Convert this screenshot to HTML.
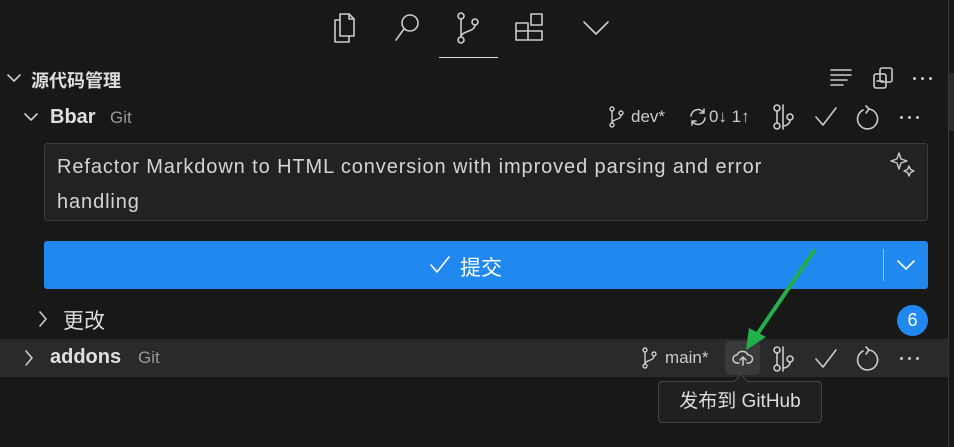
<!DOCTYPE html>
<html><head><meta charset="utf-8"><style>
*{margin:0;padding:0;box-sizing:border-box}
body{width:954px;height:447px;background:#181818;position:relative;overflow:hidden;font-family:"Segoe UI","Liberation Sans","Noto Sans CJK SC",sans-serif;color:#cccccc}
.a{position:absolute}
svg{position:absolute;overflow:visible}
.ic{fill:none;stroke:#cccccc;stroke-width:1.6;stroke-linecap:round;stroke-linejoin:round}
.dots{position:absolute;width:20px;height:4px}
.dots i{position:absolute;top:0;width:3px;height:3px;border-radius:50%;background:#ccc}
</style></head><body>
<!-- top tabs -->
<svg class="ic" style="left:332px;top:12px" width="28" height="32" viewBox="0 0 28 32"><path d="M8 2h9l5 5v17h-14z"/><path d="M17 2v5h5"/><path d="M8 8h-5v22h14v-6"/></svg>
<svg class="ic" style="left:392px;top:12px" width="30" height="30" viewBox="0 0 30 30"><circle cx="18" cy="11" r="8"/><path d="M12 17l-8 11"/></svg>
<svg class="ic" style="left:455px;top:12px" width="26" height="32" viewBox="0 0 26 32"><circle cx="6" cy="4" r="3"/><circle cx="6" cy="28" r="3"/><circle cx="20" cy="10" r="3"/><path d="M6 7v18M20 13c0 7-14 6-14 12"/></svg>
<svg class="ic" style="left:514px;top:12px" width="32" height="32" viewBox="0 0 32 32"><path d="M2 11h12v17h-12zM2 19h12M14 19h14v9h-14zM17 2h11v11h-11z"/></svg>
<svg class="ic" style="left:582px;top:20px" width="28" height="16" viewBox="0 0 28 16"><path d="M2 2l12 12l12-12"/></svg>
<div class="a" style="left:439px;top:57px;width:59px;height:1px;background:#e0e0e0"></div>
<!-- header -->
<svg class="ic" style="left:6px;top:73px" width="16" height="10" viewBox="0 0 16 10"><path d="M2 2l6 6l6-6"/></svg>
<div class="a" style="left:31px;top:67px;font-size:18px;font-weight:bold;color:#ddd">源代码管理</div>
<svg class="ic" style="left:830px;top:68px" width="22" height="18" viewBox="0 0 22 18"><path d="M1 2h20M1 7h20M1 12h16M1 17h12"/></svg>
<svg class="ic" style="left:872px;top:67px" width="22" height="22" viewBox="0 0 22 22"><rect x="8" y="1" width="12" height="14" rx="2"/><rect x="2" y="7" width="12" height="14" rx="2"/><path d="M5 14h6"/></svg>
<div class="dots" style="left:913px;top:77px"><i style="left:0"></i><i style="left:8px"></i><i style="left:16px"></i></div>
<!-- Bbar row -->
<svg class="ic" style="left:23px;top:112px" width="16" height="10" viewBox="0 0 16 10"><path d="M2 2l6 6l6-6"/></svg>
<div class="a" style="left:50px;top:106px;font-size:20px;font-weight:bold;color:#e0e0e0">Bbar</div>
<div class="a" style="left:110px;top:108px;font-size:17px;color:#9a9a9a">Git</div>
<svg class="ic" style="left:609px;top:106px;stroke-width:1.4" width="16" height="22" viewBox="0 0 16 22"><circle cx="3" cy="3" r="2"/><circle cx="3" cy="19" r="2"/><circle cx="12" cy="7" r="2"/><path d="M3 5v12M12 9c0 5-9 4-9 8"/></svg>
<div class="a" style="left:631px;top:107px;font-size:17px">dev*</div>
<svg class="ic" style="left:688px;top:107px;stroke-width:1.5" width="20" height="20" viewBox="0 0 20 20"><path d="M3 9a7 7 0 0 1 13-3M17 11a7 7 0 0 1-13 3M16 2v4h-4M4 18v-4h4"/></svg>
<div class="a" style="left:709px;top:107px;font-size:17px">0↓ 1↑</div>
<svg class="ic" style="left:772px;top:104px" width="24" height="26" viewBox="0 0 24 26"><circle cx="5" cy="4" r="3"/><circle cx="5" cy="22" r="3"/><circle cx="18" cy="13" r="3"/><path d="M5 7v12M11 1v24M18 16c0 4-4 6-7 6"/></svg>
<svg class="ic" style="left:814px;top:106px" width="24" height="22" viewBox="0 0 24 22"><path d="M2 11l7 8l13-17"/></svg>
<svg class="ic" style="left:856px;top:104px" width="24" height="26" viewBox="0 0 24 26"><path d="M7 4a10 10 0 1 0 6-1M13 3l-3-3M13 3l-3 4" transform="translate(0,2)"/></svg>
<div class="dots" style="left:900px;top:116px"><i style="left:0"></i><i style="left:8px"></i><i style="left:16px"></i></div>
<!-- textbox -->
<div class="a" style="left:44px;top:143px;width:884px;height:78px;background:#222;border:1px solid #3c3c3c;border-radius:3px"></div>
<div class="a" style="left:57px;top:150px;width:820px;font-size:20px;letter-spacing:0.9px;line-height:35px;color:#d4d4d4;white-space:nowrap">Refactor Markdown to HTML conversion with improved parsing and error<br>handling</div>
<svg class="ic" style="left:889px;top:152px;stroke-width:1.4" width="28" height="28" viewBox="0 0 28 28"><path d="M10 1l2 6l6 2l-6 2l-2 6l-2-6l-6-2l6-2z"/><path d="M20 14l1.5 3.5l3.5 1.5l-3.5 1.5l-1.5 3.5l-1.5-3.5l-3.5-1.5l3.5-1.5z"/></svg>
<!-- commit button -->
<div class="a" style="left:44px;top:241px;width:884px;height:48px;background:#2188ef;border-radius:3px"></div>
<div class="a" style="left:883px;top:249px;width:1px;height:32px;background:#8fc4f6"></div>
<svg class="ic" style="left:896px;top:259px;stroke:#fff" width="20" height="12" viewBox="0 0 20 12"><path d="M2 2l8 8l8-8"/></svg>
<svg class="ic" style="left:429px;top:255px;stroke:#fff" width="22" height="20" viewBox="0 0 22 20"><path d="M2 10l6 7l12-15"/></svg>
<div class="a" style="left:460px;top:252px;font-size:21px;color:#fff">提交</div>
<!-- changes -->
<svg class="ic" style="left:38px;top:310px" width="10" height="18" viewBox="0 0 10 18"><path d="M2 2l6 7l-6 7"/></svg>
<div class="a" style="left:63px;top:305px;font-size:21px;color:#ddd">更改</div>
<div class="a" style="left:897px;top:305px;width:31px;height:31px;border-radius:50%;background:#2188ef;color:#fff;font-size:18px;text-align:center;line-height:31px">6</div>
<!-- addons row -->
<div class="a" style="left:0;top:339px;width:948px;height:38px;background:#2a292c"></div>
<svg class="ic" style="left:24px;top:349px" width="10" height="18" viewBox="0 0 10 18"><path d="M2 2l6 7l-6 7"/></svg>
<div class="a" style="left:50px;top:346px;font-size:20px;font-weight:bold;color:#e0e0e0">addons</div>
<div class="a" style="left:138px;top:348px;font-size:17px;color:#9a9a9a">Git</div>
<svg class="ic" style="left:642px;top:347px;stroke-width:1.4" width="16" height="22" viewBox="0 0 16 22"><circle cx="3" cy="3" r="2"/><circle cx="3" cy="19" r="2"/><circle cx="12" cy="7" r="2"/><path d="M3 5v12M12 9c0 5-9 4-9 8"/></svg>
<div class="a" style="left:665px;top:348px;font-size:17px">main*</div>
<div class="a" style="left:725px;top:341px;width:35px;height:34px;background:#3a3a3a;border-radius:5px"></div>
<svg class="ic" style="left:732px;top:349px;stroke-width:1.5" width="22" height="18" viewBox="0 0 22 18"><path d="M7 14h-2a4 4 0 0 1 0-8a6 6 0 0 1 11 0a4 4 0 0 1 1 8h-2M11 16v-8M8 11l3-3l3 3"/></svg>
<svg class="ic" style="left:772px;top:346px" width="24" height="26" viewBox="0 0 24 26"><circle cx="5" cy="4" r="3"/><circle cx="5" cy="22" r="3"/><circle cx="18" cy="13" r="3"/><path d="M5 7v12M11 1v24M18 16c0 4-4 6-7 6"/></svg>
<svg class="ic" style="left:814px;top:348px" width="24" height="22" viewBox="0 0 24 22"><path d="M2 11l7 8l13-17"/></svg>
<svg class="ic" style="left:856px;top:345px" width="24" height="26" viewBox="0 0 24 26"><path d="M7 4a10 10 0 1 0 6-1M13 3l-3-3M13 3l-3 4" transform="translate(0,2)"/></svg>
<div class="dots" style="left:900px;top:357px"><i style="left:0"></i><i style="left:8px"></i><i style="left:16px"></i></div>
<!-- tooltip -->
<div class="a" style="left:658px;top:381px;width:164px;height:42px;background:#202020;border:1px solid #454545;border-radius:4px;color:#ddd;font-size:19px;line-height:40px;text-align:center">发布到 GitHub</div>
<div class="a" style="left:736px;top:376px;width:10px;height:10px;background:#202020;border-left:1px solid #454545;border-top:1px solid #454545;transform:rotate(45deg)"></div>
<!-- green arrow -->
<svg style="left:0;top:0" width="954" height="447"><path d="M814 251L756 336" stroke="#22b04b" stroke-width="4" stroke-linecap="round" fill="none"/><path d="M746 350l3-22l17 9z" fill="#22b04b"/></svg>
<!-- scrollbar -->
<div class="a" style="left:948px;top:0;width:1px;height:447px;background:#3a3a3a"></div>
<div class="a" style="left:949px;top:73px;width:5px;height:58px;background:#2c2c2c"></div>
</body></html>
